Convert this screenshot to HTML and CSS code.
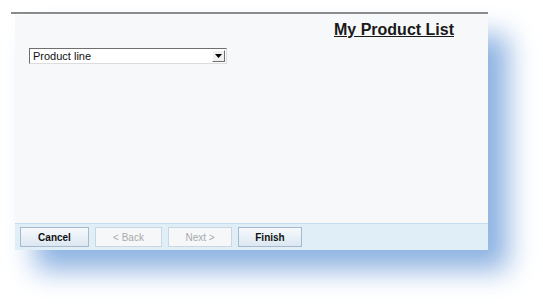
FILE: index.html
```html
<!DOCTYPE html>
<html lang="en">
<head>
<meta charset="UTF-8" />
<title>My Product List</title>
<link rel="stylesheet" href="styles.css">
</head>
<body>

<div class="frame">
  <div class="wizard">
    <div class="wizard-body">
      <h1 class="title">My Product List</h1>
      <div class="combo">
        <span class="combo-text">Product line</span>
        <span class="combo-btn">
          <svg width="7" height="4" viewBox="0 0 7 4"><path d="M0 0h7L3.5 4z" fill="#000"/></svg>
        </span>
      </div>
    </div>
    <div class="wizard-footer">
      <button class="btn btn-cancel">Cancel</button>
      <button class="btn btn-back" disabled>&lt; Back</button>
      <button class="btn btn-next" disabled>Next &gt;</button>
      <button class="btn btn-finish">Finish</button>
    </div>
  </div>
</div>

</body>
</html>
```

FILE: styles.css
```css
/* Reset */
*, *::before, *::after {
  box-sizing: border-box;
  margin: 0; padding: 0;
}
html, body {
  min-height: 100%;
  background: #ffffff;
  font-family: 'Liberation Sans', Arial, sans-serif;
  color: #111111;
}
body {
  min-height: 304px;
  padding: 12px 0 0 11px;
}
.frame {
  width: 477px;
  border-top: 2px solid #8a8a8a;
  padding: 1px 0 0 4px;
}
.wizard {
  width: 473px;
  height: 235px;
  display: flex;
  flex-direction: column;
  background: #f7f8fa;
  box-shadow: 20px 20px 26px #8db2e2;
}
.wizard-body {
  flex: 1;
  padding: 5px 34px 0 14px;
}
.title {
  font-size: 16px;
  line-height: 19px;
  font-weight: bold;
  text-align: right;
  text-decoration: underline;
  color: #1a1a1a;
}
.combo {
  margin-top: 9px;
  width: 198px;
  height: 16px;
  display: flex;
  align-items: center;
  background: #ffffff;
  border: 1px solid;
  border-color: #6f6f6f #dcdcdc #dcdcdc #6f6f6f;
}
.combo-text {
  flex: 1;
  padding-left: 3px;
  font-size: 11px;
  line-height: 14px;
  color: #111111;
}
.combo-btn {
  width: 13px;
  height: 12px;
  margin-right: 1px;
  display: flex;
  align-items: center;
  justify-content: center;
  background: #f0f0f0;
  border: 1px solid;
  border-color: #ffffff #6f6f6f #6f6f6f #ffffff;
}
.wizard-footer {
  height: 27px;
  display: flex;
  align-items: center;
  gap: 6px;
  padding: 0 0 0 5px;
  background: #e0eef8;
  border-top: 1px solid #c3dcef;
}
.btn {
  height: 20px;
  font-family: 'Liberation Sans', Arial, sans-serif;
  font-size: 10px;
  font-weight: bold;
  color: #111111;
  background: linear-gradient(#f6f9fc, #dce7f1);
  border: 1px solid #a7bacd;
}
.btn:disabled {
  font-weight: normal;
  color: #a9a9a9;
  background: #f5f7f9;
  border-color: #ccd6e0;
}
.btn-cancel { width: 69px; }
.btn-back { width: 67px; }
.btn-next { width: 64px; }
.btn-finish { width: 64px; }
```
